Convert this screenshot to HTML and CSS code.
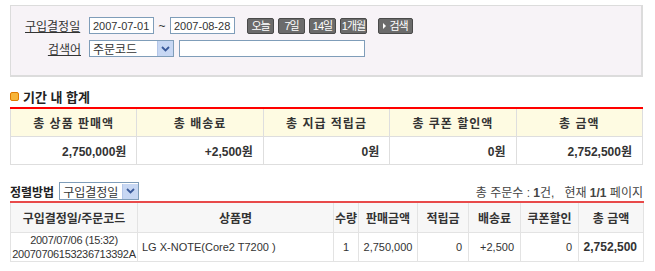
FILE: index.html
```html
<!DOCTYPE html>
<html lang="ko">

<head>
    <meta charset="UTF-8">
    <title>주문 내역</title>
    <link rel="stylesheet" href="styles.css">
</head>

<body>
    <div class="page">
        <div class="search-box">
            <div class="search-row">
                <span class="label">구입결정일</span>
                <input class="date-input" type="text" value="2007-07-01">
                <span class="tilde">~</span>
                <input class="date-input" type="text" value="2007-08-28">
                <div class="quick-btns">
                    <span class="btn">오늘</span>
                    <span class="btn">7일</span>
                    <span class="btn">14일</span>
                    <span class="btn">1개월</span>
                </div>
                <span class="btn btn-search"><span class="arrow"></span>검색</span>
            </div>
            <div class="search-row">
                <span class="label label-short">검색어</span>
                <div class="select select-wide">
                    <span>주문코드</span>
                    <span class="select-arrow"><svg width="9" height="6" viewBox="0 0 9 6"><path d="M1 1 L4.5 4.5 L8 1" fill="none" stroke="#3a5a9a" stroke-width="1.8"/></svg></span>
                </div>
                <input class="keyword-input" type="text">
            </div>
        </div>

        <h2 class="section-title"><span class="bullet"></span>기간 내 합계</h2>
        <table class="summary">
            <tr>
                <th>총 상품 판매액</th>
                <th>총 배송료</th>
                <th>총 지급 적립금</th>
                <th>총 쿠폰 할인액</th>
                <th>총 금액</th>
            </tr>
            <tr>
                <td>2,750,000원</td>
                <td>+2,500원</td>
                <td>0원</td>
                <td>0원</td>
                <td>2,752,500원</td>
            </tr>
        </table>

        <div class="list-bar">
            <div class="sort">
                <span class="sort-label">정렬방법</span>
                <div class="select select-sort">
                    <span>구입결정일</span>
                    <span class="select-arrow"><svg width="9" height="6" viewBox="0 0 9 6"><path d="M1 1 L4.5 4.5 L8 1" fill="none" stroke="#3a5a9a" stroke-width="1.8"/></svg></span>
                </div>
            </div>
            <div class="count">총 주문수 : <b>1</b>건, &nbsp;&nbsp;현재 <b>1/1</b> 페이지</div>
        </div>
        <table class="orders">
            <colgroup>
                <col style="width:127px">
                <col style="width:196px">
                <col style="width:25px">
                <col style="width:59px">
                <col style="width:51px">
                <col style="width:52px">
                <col style="width:58px">
                <col style="width:65px">
            </colgroup>
            <tr>
                <th>구입결정일/주문코드</th>
                <th>상품명</th>
                <th>수량</th>
                <th>판매금액</th>
                <th>적립금</th>
                <th>배송료</th>
                <th>쿠폰할인</th>
                <th>총 금액</th>
            </tr>
            <tr>
                <td class="date-cell">2007/07/06 (15:32)<br>20070706153236713392A</td>
                <td class="name">LG X-NOTE(Core2 T7200 )</td>
                <td class="center">1</td>
                <td class="center">2,750,000</td>
                <td class="num">0</td>
                <td class="num">+2,500</td>
                <td class="num">0</td>
                <td class="num total">2,752,500</td>
            </tr>
        </table>
    </div>
</body>

</html>
```

FILE: styles.css
```css
body {
    margin: 0;
    font-family: "Liberation Sans", "Noto Sans CJK KR", sans-serif;
    font-size: 12px;
    color: #333;
    background: #fff;
}

.page {
    width: 633px;
    padding: 5px 0 0 10px;
}

/* search box */
.search-box {
    height: 72px;
    box-sizing: border-box;
    background: #f7f3f7;
    border: 1px solid #dcdcdc;
    border-right-width: 2px;
    border-bottom-width: 2px;
    padding: 11px 0 0 14px;
    display: flex;
    flex-direction: column;
    gap: 6px;
}

.search-row {
    display: flex;
    align-items: center;
    height: 17px;
}

.label {
    width: 64px;
    text-decoration: underline;
    color: #333;
}

.label-short {
    text-align: right;
    width: 56px;
    margin-right: 8px;
}

.date-input {
    width: 65px;
    height: 17px;
    box-sizing: border-box;
    border: 1px solid #7f9db9;
    padding: 0 3px;
    font-family: inherit;
    font-size: 11px;
    color: #333;
    background: #fff;
}

.tilde {
    width: 16px;
    text-align: center;
}

.quick-btns {
    display: flex;
    gap: 4px;
    margin-left: 12px;
}

.btn {
    display: inline-block;
    height: 16px;
    line-height: 14px;
    box-sizing: border-box;
    width: 27px;
    text-align: center;
    background: #6b6b6b;
    border: 1px solid #4a4a4a;
    border-radius: 2px;
    color: #fff;
    font-size: 11px;
    letter-spacing: -1px;
    white-space: nowrap;
    overflow: hidden;
}

.btn-search {
    margin-left: 11px;
    width: 35px;
    display: flex;
    align-items: center;
    justify-content: center;
    gap: 3px;
}

.arrow {
    width: 0;
    height: 0;
    border-left: 3px solid #fff;
    border-top: 3px solid transparent;
    border-bottom: 3px solid transparent;
}

.select {
    height: 17px;
    box-sizing: border-box;
    border: 1px solid #7f9db9;
    background: #fff;
    display: flex;
    align-items: center;
    justify-content: space-between;
    padding-left: 3px;
    font-size: 12px;
}

.select-wide {
    width: 85px;
}

.select-arrow {
    width: 15px;
    height: 15px;
    background: #c7d7f3;
    border-left: 1px solid #b4c6e8;
    display: flex;
    align-items: center;
    justify-content: center;
}

.keyword-input {
    margin-left: 5px;
    width: 186px;
    height: 17px;
    box-sizing: border-box;
    border: 1px solid #7f9db9;
    background: #fff;
}

/* summary */
.section-title {
    margin: 12px 0 4px 0;
    font-size: 13px;
    font-weight: bold;
    color: #222;
    display: flex;
    align-items: center;
    gap: 4px;
    height: 14px;
}

.bullet {
    width: 7px;
    height: 7px;
    background: #f7b53a;
    border: 1px solid #e07a00;
    border-radius: 2px;
}

table {
    border-collapse: collapse;
    width: 633px;
}

.summary {
    table-layout: fixed;
    border-top: 2px solid #f00;
}

.summary th,
.summary td {
    border: 1px solid #dedede;
    height: 27px;
    padding: 0;
}

.summary th {
    background: #fefbe2;
    font-weight: bold;
    letter-spacing: 1px;
    color: #333;
}

.summary td {
    text-align: right;
    padding-right: 10px;
    font-weight: bold;
    color: #333;
}

/* order list */
.list-bar {
    margin-top: 17px;
    display: flex;
    justify-content: space-between;
    align-items: flex-end;
    height: 18px;
    margin-bottom: 1px;
}

.sort {
    display: flex;
    align-items: center;
    gap: 5px;
}

.sort-label {
    font-weight: bold;
    font-size: 12px;
    color: #222;
}

.select-sort {
    width: 80px;
    height: 18px;
}

.count {
    font-size: 12px;
    color: #444;
}

.orders {
    table-layout: fixed;
    border-top: 2px solid #e84a4a;
}

.orders th,
.orders td {
    border: 1px solid #e3e3e3;
    padding: 0;
    white-space: nowrap;
}

.orders th {
    height: 29px;
    background: #f7f7f7;
    font-weight: bold;
    color: #333;
    letter-spacing: 0;
}

.orders td {
    height: 28px;
    font-size: 11px;
    color: #333;
}

.date-cell {
    text-align: center;
    line-height: 14px;
    font-size: 11px;
    letter-spacing: -0.3px;
}

.name {
    padding-left: 4px !important;
    font-size: 11px;
}

.center {
    text-align: center;
}

.num {
    text-align: right;
    padding-right: 6px !important;
}

.total {
    font-weight: bold;
    font-size: 12px !important;
}
```
